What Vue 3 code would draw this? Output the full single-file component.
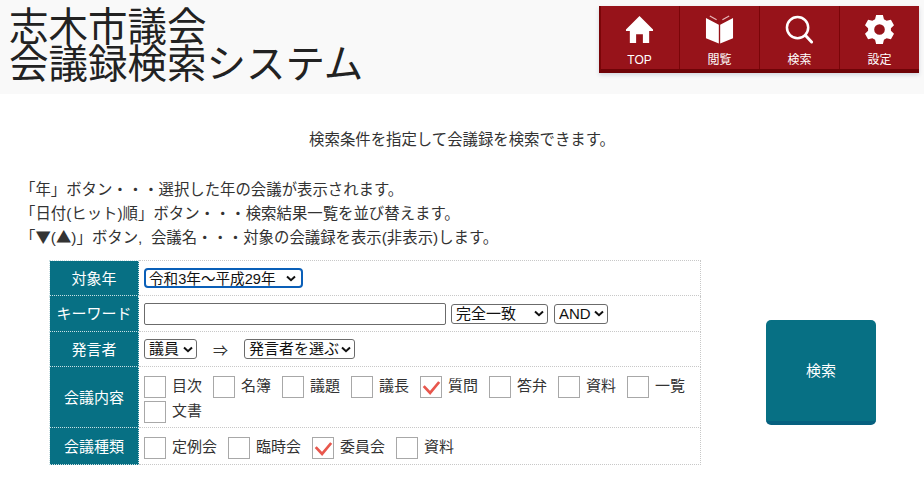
<script setup>
const nav = [
  { label: 'TOP', icon: 'home' },
  { label: '閲覧', icon: 'book' },
  { label: '検索', icon: 'search' },
  { label: '設定', icon: 'gear' },
]
const row1 = [
  { t: '目次' }, { t: '名簿' }, { t: '議題' }, { t: '議長' }, { t: '質問', on: true },
  { t: '答弁' }, { t: '資料' }, { t: '一覧' }, { t: '文書' },
]
const row2 = [
  { t: '定例会' }, { t: '臨時会' }, { t: '委員会', on: true }, { t: '資料' },
]
</script>

<template>
  <div class="page">
    <header class="head">
      <h1 class="title">
        <span class="tl">志木市議会</span>
        <span class="tl">会議録検索システム</span>
      </h1>
      <nav class="nav">
        <a v-for="n in nav" :key="n.label" class="nav-item">
          <svg class="ico" viewBox="0 0 30 30">
            <path v-if="n.icon === 'home'" fill="#fff" d="M15 1 L29 15 L29 16.5 L25 16.5 L25 29 L18.5 29 L18.5 20 L11.5 20 L11.5 29 L5 29 L5 16.5 L1 16.5 L1 15 Z" />
            <g v-else-if="n.icon === 'book'">
              <path fill="#fff" d="M1 3 L14.3 10 L14.3 29.5 L1 24 Z M29 3 L15.7 10 L15.7 29.5 L29 24 Z" />
              <path fill="none" stroke="#e8b9bb" stroke-width="1.2" d="M5 1 L12 5 M25 1 L18 5" />
            </g>
            <g v-else-if="n.icon === 'search'" fill="none" stroke="#fff">
              <circle cx="13" cy="13" r="11" stroke-width="2.6" />
              <path stroke-width="3" stroke-linecap="round" d="M21 21 L27.5 28" />
            </g>
            <path v-else fill="#fff" fill-rule="evenodd" d="M11.5 1 H18.5 L19.6 5.4 L22.4 7 L26.8 5.8 L30 11.6 L26.8 14.6 V17.4 L30 20.4 L26.8 26.2 L22.4 25 L19.6 26.6 L18.5 31 H11.5 L10.4 26.6 L7.6 25 L3.2 26.2 L0 20.4 L3.2 17.4 V14.6 L0 11.6 L3.2 5.8 L7.6 7 L10.4 5.4 Z M15 10.5 A5.5 5.5 0 1 0 15 21.5 A5.5 5.5 0 1 0 15 10.5 Z" transform="translate(0 -1)" />
          </svg>
          <span class="nav-label">{{ n.label }}</span>
        </a>
      </nav>
    </header>

    <p class="lead">検索条件を指定して会議録を検索できます。</p>

    <div class="help">
      <p>「年」ボタン・・・選択した年の会議が表示されます。</p>
      <p>「日付(ヒット)順」ボタン・・・検索結果一覧を並び替えます。</p>
      <p>「<span class="cjk">▼</span>(<span class="cjk">▲</span>)」ボタン,&nbsp;&nbsp;会議名・・・対象の会議録を表示(非表示)します。</p>
    </div>

    <div class="search">
      <table class="form">
        <tbody>
          <tr class="r1">
            <th>対象年</th>
            <td>
              <select class="sel sel-year">
                <option>令和3年～平成29年</option>
              </select>
            </td>
          </tr>
          <tr class="r2">
            <th>キーワード</th>
            <td>
              <div class="line">
                <input class="kw" type="text" />
                <select class="sel sel-match"><option>完全一致</option></select>
                <select class="sel sel-and"><option>AND</option></select>
              </div>
            </td>
          </tr>
          <tr class="r3">
            <th>発言者</th>
            <td>
              <div class="line">
                <select class="sel sel-role"><option>議員</option></select>
                <span class="arrow">⇒</span>
                <select class="sel sel-person"><option>発言者を選ぶ</option></select>
              </div>
            </td>
          </tr>
          <tr class="r4">
            <th>会議内容</th>
            <td>
              <div class="checks">
                <label v-for="c in row1" :key="c.t" class="check">
                  <span class="box">
                    <svg v-if="c.on" class="tick" viewBox="0 0 22 22"><path d="M3 10 L10 17.5 L20 5.5" /></svg>
                  </span>
                  <span class="ctext">{{ c.t }}</span>
                </label>
              </div>
            </td>
          </tr>
          <tr class="r5">
            <th>会議種類</th>
            <td>
              <div class="checks">
                <label v-for="c in row2" :key="c.t" class="check">
                  <span class="box">
                    <svg v-if="c.on" class="tick" viewBox="0 0 22 22"><path d="M3 10 L10 17.5 L20 5.5" /></svg>
                  </span>
                  <span class="ctext">{{ c.t }}</span>
                </label>
              </div>
            </td>
          </tr>
        </tbody>
      </table>
      <button class="go" type="button">検索</button>
    </div>
  </div>
</template>

<style>
html, body { margin: 0; background: #fff; }
</style>

<style scoped>
.page {
  width: 924px;
  height: 490px;
  overflow: hidden;
  font-family: "Liberation Sans", "Noto Sans CJK JP", sans-serif;
  color: #333;
  font-size: 15px;
}
.head {
  height: 94px;
  background: #f9f9f9;
  display: flex;
  justify-content: space-between;
  align-items: flex-start;
}
.title {
  margin: 9px 0 0 9px;
  font-size: 39.5px;
  font-weight: 400;
  color: #222;
  display: flex;
  flex-direction: column;
}
.tl { display: block; height: 37px; line-height: 37px; }
.nav {
  display: flex;
  margin: 6px 5px 0 0;
  border-left: 2px solid #7a0508;
  border-bottom: 4px solid #6f0307;
  background: #97131a;
  box-shadow: 0 2px 4px rgba(60, 80, 120, 0.2);
}
.nav-item {
  width: 80px;
  height: 63px;
  box-sizing: border-box;
  border-right: 1px solid #7a0508;
  display: flex;
  flex-direction: column;
  align-items: center;
  padding-top: 9px;
  color: #fff;
}
.nav-item:first-child { width: 79px; padding-right: 1px; }
.nav-item:last-child { width: 79px; border-right: 0; }
.ico { width: 29px; height: 29px; display: block; }
.nav-label { font-size: 12px; line-height: 14px; margin-top: 9px; }
.lead {
  margin: 36px 0 0;
  text-align: center;
  font-size: 15.4px;
  line-height: 20px;
}
.help {
  margin: 28px 0 0 20px;
  font-size: 15.4px;
  line-height: 24px;
}
.help p { margin: 0; height: 24px; }
.cjk { font-family: "Noto Sans CJK JP", sans-serif; line-height: 0; }
.search {
  display: flex;
  margin: 10px 0 0 49px;
  align-items: flex-start;
}
.form {
  width: 652px;
  border-collapse: collapse;
  table-layout: fixed;
}
.form th {
  width: 89px;
  box-sizing: border-box;
  background: #077084;
  color: #fff;
  font-weight: 400;
  font-size: 15px;
  padding: 0 0 2px;
  border: 1px dotted #c9e0e4;
  text-align: center;
}
.form td {
  border: 1px dotted #c8c8c8;
  padding: 0 0 0 5px;
  color: #333;
}
.r1 { height: 35px; }
.r2 { height: 36px; }
.r3 { height: 35px; }
.r4 { height: 61px; }
.r5 { height: 37px; }
.r4 td { padding-top: 4px; }
.r5 td { padding-top: 3px; }
.line { display: flex; align-items: center; }
.sel {
  appearance: none;
  -webkit-appearance: none;
  height: 20px;
  box-sizing: border-box;
  border: 1px solid #6b6b6b;
  border-radius: 3px;
  font-family: "Liberation Sans", "Noto Sans CJK JP", sans-serif;
  font-size: 15px;
  line-height: 18px;
  color: #111;
  padding: 0 0 0 4px;
  background: #fff url("data:image/svg+xml,%3Csvg xmlns='http://www.w3.org/2000/svg' width='10' height='7'%3E%3Cpath d='M1 1.5 L5 5.2 L9 1.5' fill='none' stroke='%23111' stroke-width='2'/%3E%3C/svg%3E") no-repeat right 3px center;
  display: block;
  outline: none;
}
.sel-year {
  width: 159px;
  font-size: 14.6px;
  border: 2px solid #0a5fb8;
  border-radius: 4px;
  padding-left: 3px;
  background-position: right 5px center;
}
.kw {
  width: 302px;
  height: 22px;
  box-sizing: border-box;
  border: 1px solid #6b6b6b;
  border-radius: 2px;
  background: #fff;
  padding: 0;
  margin: 0 5px 0 0;
  outline: none;
}
.sel-match { width: 97px; margin-right: 6px; }
.sel-and { width: 54px; }
.sel-role { width: 53px; }
.arrow {
  width: 47px;
  text-align: center;
  color: #333;
}
.sel-person { width: 111px; }
.checks {
  display: flex;
  flex-wrap: wrap;
  gap: 3px 0;
  width: 555px;
}
.check {
  display: flex;
  align-items: center;
  height: 22px;
  margin-right: 11px;
}
.box {
  width: 22px;
  height: 22px;
  box-sizing: border-box;
  border: 1px solid #a8a8a8;
  background: #fff;
  margin-right: 6px;
  display: block;
  position: relative;
}
.tick {
  position: absolute;
  left: 0;
  top: 0;
  width: 100%;
  height: 100%;
}
.tick path {
  fill: none;
  stroke: #e8574d;
  stroke-width: 3;
}
.ctext { font-size: 15px; line-height: 20px; padding-bottom: 2px; color: #333; }
.go {
  width: 110px;
  height: 105px;
  margin: 60px 0 0 65px;
  border: 0;
  border-bottom: 4px solid #06607f;
  border-radius: 5px;
  background: #077084;
  color: #fff;
  font-family: "Liberation Sans", "Noto Sans CJK JP", sans-serif;
  font-size: 15px;
  padding: 0 0 3px;
}
</style>
